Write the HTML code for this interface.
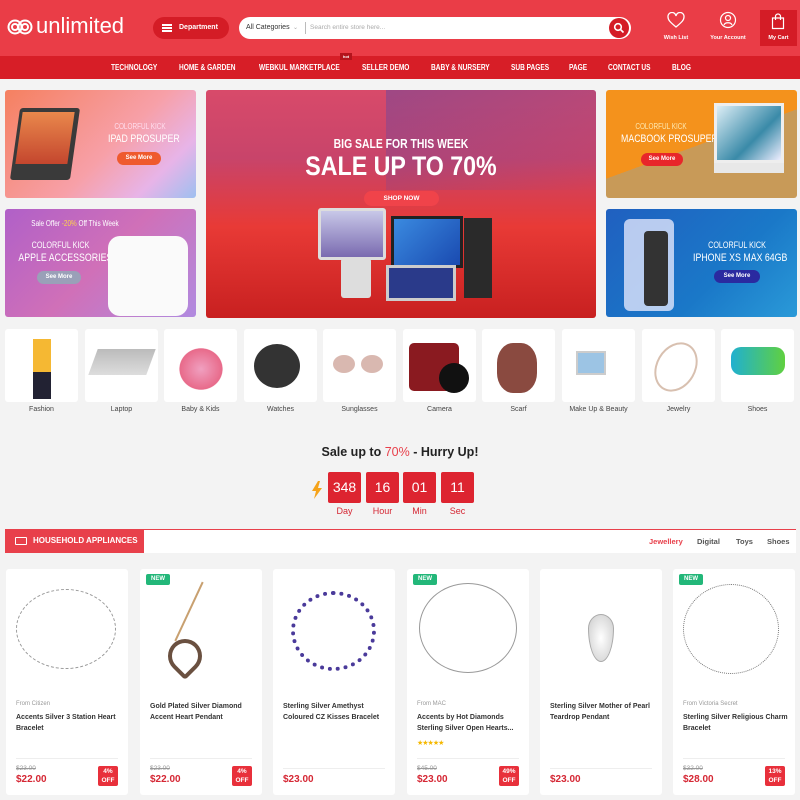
<!DOCTYPE html>
<html><head><meta charset="utf-8"><style>
*{margin:0;padding:0;box-sizing:border-box}
body{width:800px;height:800px;overflow:hidden;background:#f3f3f3;font-family:"Liberation Sans",sans-serif;position:relative}
.a{position:absolute}
.hdr{left:0;top:0;width:800px;height:56px;background:#ea3d47}
.nav{left:0;top:56px;width:800px;height:23px;background:#d71e27;color:#fff;font-size:8px;font-weight:bold}
.nav span{position:absolute;top:7px;white-space:nowrap;transform:scaleX(.82);transform-origin:left}
.ban{border-radius:3px;overflow:hidden}
.bt{color:#fff;text-align:center;white-space:nowrap;transform:scaleX(.8);transform-origin:center}
.btn{border-radius:9px;color:#fff;font-size:6px;text-align:center;line-height:13px;font-weight:bold}
.tile{top:329px;width:73px;height:73px;background:#fff;border-radius:3px}
.tl{top:406px;width:73px;text-align:center;font-size:7px;color:#444}
.cd{top:472px;width:33px;height:31px;background:#dd2430;border-radius:2px;color:#fff;font-size:14px;text-align:center;line-height:31px}
.cl{top:506px;width:33px;text-align:center;color:#d52734;font-size:9px}
.card{top:569px;width:122px;height:226px;background:#fff;border-radius:3px}
.card .from{position:absolute;left:10px;top:132px;font-size:6px;color:#999}
.card .nm{position:absolute;left:10px;font-size:7px;color:#333;line-height:11px;font-weight:bold;width:110px}
.card .ln{position:absolute;left:10px;right:10px;top:189px;border-top:1px solid #eee}
.card .old{position:absolute;left:10px;top:196px;font-size:6.5px;color:#999;text-decoration:line-through}
.card .pr{position:absolute;left:10px;top:205px;font-size:10px;color:#d52734;font-weight:bold}
.card .off{position:absolute;right:10px;top:197px;width:20px;height:20px;background:#e8303b;color:#fff;font-size:6.5px;font-weight:bold;text-align:center;line-height:9px;padding-top:1px;border-radius:2px}
.new{position:absolute;left:6px;top:5px;width:24px;height:11px;background:#22b779;color:#fff;font-size:6px;font-weight:bold;text-align:center;line-height:11px;border-radius:2px}
</style></head><body>
<div class="a hdr">
 <svg class="a" style="left:7px;top:17px" width="26" height="20" viewBox="0 0 26 20"><g fill="none" stroke="#fff" stroke-width="2"><circle cx="8" cy="10" r="6.5"/><circle cx="18" cy="10" r="6.5"/><circle cx="8" cy="10" r="3"/><circle cx="18" cy="10" r="3"/></g></svg>
 <div class="a" style="left:36px;top:13px;color:#fff;font-size:22px">unlimited</div>
 <div class="a" style="left:153px;top:17px;width:76px;height:22px;background:#d41c26;border-radius:11px;color:#fff;font-size:7px;font-weight:bold;line-height:22px;padding-left:26px">Department</div>
 <div class="a" style="left:162px;top:24px;width:10px;height:1.5px;background:#fff;box-shadow:0 3px 0 #fff,0 6px 0 #fff"></div>
 <div class="a" style="left:239px;top:17px;width:392px;height:22px;background:#fff;border-radius:11px"></div>
 <div class="a" style="left:246px;top:24px;font-size:7px;color:#333">All Categories</div>
 <div class="a" style="left:293px;top:24px;font-size:6px;color:#aaa">⌄</div>
 <div class="a" style="left:305px;top:22px;width:1px;height:12px;background:#bbb"></div>
 <div class="a" style="left:310px;top:24px;font-size:6.5px;color:#aaa">Search entire store here...</div>
 <div class="a" style="left:609px;top:18px;width:20px;height:20px;border-radius:50%;background:#d41c26"></div>
 <svg class="a" style="left:613px;top:22px" width="12" height="12"><circle cx="5" cy="5" r="3.3" fill="none" stroke="#fff" stroke-width="1.6"/><path d="M7.5 7.5l3 3" stroke="#fff" stroke-width="1.6"/></svg>
 <svg class="a" style="left:667px;top:12px" width="18" height="17" viewBox="0 0 18 17"><path d="M9 15C3 10 1 8 1 5a4 4 0 0 1 8-1 4 4 0 0 1 8 1c0 3-2 5-8 10z" fill="none" stroke="#fff" stroke-width="1.3"/></svg>
 <div class="a" style="left:660px;top:35px;width:32px;text-align:center;color:#fff;font-size:5.5px;font-weight:bold">Wish List</div>
 <svg class="a" style="left:719px;top:11px" width="18" height="18"><circle cx="9" cy="9" r="7.5" fill="none" stroke="#fff" stroke-width="1.2"/><circle cx="9" cy="7" r="2.5" fill="none" stroke="#fff" stroke-width="1.2"/><path d="M5 14c1-3 7-3 8 0" fill="none" stroke="#fff" stroke-width="1.2"/></svg>
 <div class="a" style="left:706px;top:35px;width:44px;text-align:center;color:#fff;font-size:5.5px;font-weight:bold">Your Account</div>
 <div class="a" style="left:760px;top:10px;width:37px;height:36px;background:#d41c26"></div>
 <svg class="a" style="left:771px;top:13px" width="14" height="17"><path d="M1.5 5h11v10.5h-11z M4.5 7V3.5a2.5 2.5 0 0 1 5 0V7" fill="none" stroke="#fff" stroke-width="1.2"/></svg>
 <div class="a" style="left:760px;top:35px;width:37px;text-align:center;color:#fff;font-size:5.5px;font-weight:bold">My Cart</div>
</div>
<div class="a nav">
 <span style="left:111px">TECHNOLOGY</span><span style="left:179px">HOME &amp; GARDEN</span><span style="left:259px">WEBKUL MARKETPLACE</span><span style="left:362px">SELLER DEMO</span><span style="left:431px">BABY &amp; NURSERY</span><span style="left:511px">SUB PAGES</span><span style="left:569px">PAGE</span><span style="left:608px">CONTACT US</span><span style="left:672px">BLOG</span>
 <div style="position:absolute;left:340px;top:-3px;width:12px;height:7px;background:#b3141c;font-size:4px;color:#fff;text-align:center;line-height:7px">hot</div>
</div>
<!-- banners -->
<div class="a ban" style="left:5px;top:90px;width:191px;height:108px;background:linear-gradient(135deg,#f58060,#f7a0a8 55%,#e7b4e8 80%,#9ec0f0)">
 <div class="a" style="left:10px;top:18px;width:60px;height:72px;background:#3a3a3a;border-radius:3px;transform:skewX(-8deg)"></div>
 <div class="a" style="left:14px;top:22px;width:52px;height:52px;background:linear-gradient(#e9884c,#c4462e);transform:skewX(-8deg)"></div>
 <div class="a bt" style="left:95px;top:32px;width:80px;font-size:8px;color:#fde">COLORFUL KICK</div>
 <div class="a bt" style="left:95px;top:43px;width:80px;font-size:11px">IPAD PROSUPER</div>
 <div class="a btn" style="left:112px;top:62px;width:44px;background:#ef5a2e">See More</div>
</div>
<div class="a ban" style="left:5px;top:209px;width:191px;height:108px;background:linear-gradient(135deg,#b060c8,#d070b8 50%,#b08ae0)">
 <div class="a bt" style="left:10px;top:10px;width:120px;font-size:8px">Sale Offer <span style="color:#ffd34a">-20%</span> Off This Week</div>
 <div class="a bt" style="left:8px;top:31px;width:95px;font-size:9px">COLORFUL KICK</div>
 <div class="a bt" style="left:3px;top:43px;width:104px;font-size:11px">APPLE ACCESSORIES</div>
 <div class="a btn" style="left:32px;top:62px;width:44px;height:13px;background:#9aa0b8">See More</div>
 <div class="a" style="left:103px;top:27px;width:80px;height:80px;background:#fafafa;border-radius:12px"></div>
</div>
<div class="a ban" style="left:206px;top:90px;width:390px;height:228px;background:linear-gradient(180deg,#d84a6a 0%,#c8446a 30%,#e83a36 60%,#c82020 100%)">
 <div class="a" style="left:180px;top:0;width:210px;height:100px;background:linear-gradient(160deg,rgba(120,70,150,.6),rgba(160,80,140,0))"></div>
 <div class="a bt" style="left:0;top:46px;width:390px;font-size:13px;font-weight:bold">BIG SALE FOR THIS WEEK</div>
 <div class="a bt" style="left:0;top:61px;width:390px;font-size:27px;font-weight:bold;transform:scaleX(.86)">SALE UP TO 70%</div>
 <div class="a btn" style="left:158px;top:101px;width:75px;height:15px;line-height:15px;background:#f0434a;font-size:6.5px">SHOP NOW</div>
 <div class="a" style="left:112px;top:118px;width:68px;height:52px;background:linear-gradient(#c8c8e8,#7a6ab0);border:3px solid #ddd;border-radius:3px"></div>
 <div class="a" style="left:185px;top:126px;width:72px;height:52px;background:linear-gradient(135deg,#3a8ae0,#1a4ab0);border:3px solid #222"></div>
 <div class="a" style="left:258px;top:128px;width:28px;height:80px;background:#2a2a2a"></div>
 <div class="a" style="left:180px;top:175px;width:70px;height:36px;background:#2a3a8a;border:3px solid #ccc"></div>
 <div class="a" style="left:135px;top:168px;width:30px;height:40px;background:#ddd;border-radius:3px"></div>
</div>
<div class="a ban" style="left:606px;top:90px;width:191px;height:108px;background:linear-gradient(160deg,#f4921c 50%,#c89a58 50%)">
 <div class="a bt" style="left:15px;top:32px;width:80px;font-size:8px;color:#fde8b0">COLORFUL KICK</div>
 <div class="a bt" style="left:5px;top:43px;width:100px;font-size:11px">MACBOOK PROSUPER</div>
 <div class="a btn" style="left:35px;top:63px;width:42px;background:#e8262a">See More</div>
 <div class="a" style="left:108px;top:13px;width:70px;height:60px;background:linear-gradient(135deg,#ddeef6,#3a8aa8 60%,#eef);border:3px solid #eee"></div>
 <div class="a" style="left:108px;top:73px;width:70px;height:10px;background:#e8e8e8"></div>
</div>
<div class="a ban" style="left:606px;top:209px;width:191px;height:108px;background:linear-gradient(135deg,#2060c0,#1a78c8 60%,#2a9ad8)">
 <div class="a" style="left:18px;top:10px;width:50px;height:92px;background:#eef;opacity:.75;border-radius:6px"></div>
 <div class="a" style="left:38px;top:22px;width:24px;height:75px;background:#333;border-radius:4px"></div>
 <div class="a bt" style="left:86px;top:31px;width:90px;font-size:9px">COLORFUL KICK</div>
 <div class="a bt" style="left:76px;top:43px;width:110px;font-size:11px">IPHONE XS MAX 64GB</div>
 <div class="a btn" style="left:108px;top:61px;width:46px;height:13px;background:#2a2aa0">See More</div>
</div>
<!-- tiles -->
<div class="a tile" style="left:5px"><div class="a" style="left:28px;top:10px;width:18px;height:60px;background:linear-gradient(#f5b833 0 55%,#223 55%)"></div></div>
<div class="a tile" style="left:85px"><div class="a" style="left:8px;top:20px;width:58px;height:26px;background:linear-gradient(#bbb,#ddd);transform:skewX(-20deg)"></div></div>
<div class="a tile" style="left:164px"><div class="a" style="left:12px;top:16px;width:50px;height:48px;background:radial-gradient(#f0a0c0,#e86a8a 60%,transparent 62%)"></div></div>
<div class="a tile" style="left:244px"><div class="a" style="left:10px;top:15px;width:46px;height:44px;border-radius:50%;background:#333"></div></div>
<div class="a tile" style="left:323px"><div class="a" style="left:10px;top:26px;width:22px;height:18px;border-radius:50%;background:#d9b8b0"></div><div class="a" style="left:38px;top:26px;width:22px;height:18px;border-radius:50%;background:#d9b8b0"></div></div>
<div class="a tile" style="left:403px"><div class="a" style="left:6px;top:14px;width:50px;height:48px;background:#8a1a20;border-radius:5px"></div><div class="a" style="left:36px;top:34px;width:30px;height:30px;border-radius:50%;background:#111"></div></div>
<div class="a tile" style="left:482px"><div class="a" style="left:15px;top:14px;width:40px;height:50px;background:#8a4a40;border-radius:40%"></div></div>
<div class="a tile" style="left:562px"><div class="a" style="left:14px;top:22px;width:30px;height:24px;background:#9cc4e4;border:2px solid #ccc"></div></div>
<div class="a tile" style="left:642px"><div class="a" style="left:14px;top:12px;width:40px;height:52px;border:2px solid #d8c0b0;border-radius:50%;transform:rotate(30deg)"></div></div>
<div class="a tile" style="left:721px"><div class="a" style="left:10px;top:18px;width:54px;height:28px;background:linear-gradient(90deg,#20b0d0,#60d040);border-radius:10px"></div></div>
<div class="a tl" style="left:5px">Fashion</div><div class="a tl" style="left:85px">Laptop</div><div class="a tl" style="left:164px">Baby &amp; Kids</div><div class="a tl" style="left:244px">Watches</div><div class="a tl" style="left:323px">Sunglasses</div><div class="a tl" style="left:403px">Camera</div><div class="a tl" style="left:482px">Scarf</div><div class="a tl" style="left:562px">Make Up &amp; Beauty</div><div class="a tl" style="left:642px">Jewelry</div><div class="a tl" style="left:721px">Shoes</div>
<!-- countdown -->
<div class="a" style="left:0;top:445px;width:800px;text-align:center;font-size:12.5px;font-weight:bold;color:#222">Sale up to <span style="color:#e8404b;font-weight:normal">70%</span> - Hurry Up!</div>
<svg class="a" style="left:311px;top:481px" width="12" height="18"><path d="M7 0L1 10h4l-2 8 8-11H7l2-7z" fill="#f5a31a"/></svg>
<div class="a cd" style="left:328px">348</div><div class="a cd" style="left:366px">16</div><div class="a cd" style="left:403px">01</div><div class="a cd" style="left:441px">11</div>
<div class="a cl" style="left:328px">Day</div><div class="a cl" style="left:366px">Hour</div><div class="a cl" style="left:403px">Min</div><div class="a cl" style="left:441px">Sec</div>
<!-- section bar -->
<div class="a" style="left:5px;top:529px;width:791px;height:24px;background:#fff;border-top:1px solid #e8404b"></div>
<div class="a" style="left:5px;top:529px;width:139px;height:24px;background:#e8404b;color:#fff;font-size:8px;font-weight:bold;line-height:24px;padding-left:28px">HOUSEHOLD APPLIANCES</div>
<div class="a" style="left:15px;top:537px;width:12px;height:8px;border:1.3px solid #fff;border-radius:1px"></div>
<div class="a" style="left:649px;top:537px;font-size:7.5px;font-weight:bold;color:#e8404b">Jewellery</div>
<div class="a" style="left:697px;top:537px;font-size:7.5px;font-weight:bold;color:#555">Digital</div>
<div class="a" style="left:736px;top:537px;font-size:7.5px;font-weight:bold;color:#555">Toys</div>
<div class="a" style="left:767px;top:537px;font-size:7.5px;font-weight:bold;color:#555">Shoes</div>
<!-- cards -->
<div class="a card" style="left:6px"><div class="a" style="left:10px;top:20px;width:100px;height:80px;border:1.5px dashed #999;border-radius:50%"></div><div class="from">From Citizen</div><div class="nm" style="top:143px">Accents Silver 3 Station Heart Bracelet</div><div class="ln"></div><div class="old">$23.00</div><div class="pr">$22.00</div><div class="off">4%<br>OFF</div></div>
<div class="a card" style="left:140px"><div class="new">NEW</div><div class="a" style="left:28px;top:70px;width:34px;height:34px;border:4px solid #6a5040;border-radius:50% 50% 10% 50%;transform:rotate(45deg)"></div><div class="a" style="left:48px;top:10px;width:2px;height:65px;background:#c8a070;transform:rotate(25deg)"></div><div class="nm" style="top:132px">Gold Plated Silver Diamond Accent Heart Pendant</div><div class="ln"></div><div class="old">$23.00</div><div class="pr">$22.00</div><div class="off">4%<br>OFF</div></div>
<div class="a card" style="left:273px"><div class="a" style="left:18px;top:22px;width:85px;height:80px;border:4px dotted #4a3a9a;border-radius:50%"></div><div class="nm" style="top:132px">Sterling Silver Amethyst Coloured CZ Kisses Bracelet</div><div class="a" style="left:10px;right:10px;top:199px;border-top:1px solid #eee"></div><div class="pr" style="top:205px">$23.00</div></div>
<div class="a card" style="left:407px"><div class="new">NEW</div><div class="a" style="left:12px;top:14px;width:98px;height:90px;border:1.5px solid #999;border-radius:50%"></div><div class="from">From MAC</div><div class="nm" style="top:143px">Accents by Hot Diamonds Sterling Silver Open Hearts...</div><div class="a" style="left:10px;top:170px;font-size:7px;color:#f5b800;letter-spacing:-1px">★★★★★</div><div class="ln"></div><div class="old">$45.00</div><div class="pr">$23.00</div><div class="off">49%<br>OFF</div></div>
<div class="a card" style="left:540px"><div class="a" style="left:48px;top:45px;width:26px;height:48px;background:radial-gradient(#fff,#ccc);border:1px solid #aaa;border-radius:50% 50% 50% 50%/30% 30% 70% 70%"></div><div class="nm" style="top:132px">Sterling Silver Mother of Pearl Teardrop Pendant</div><div class="a" style="left:10px;right:10px;top:199px;border-top:1px solid #eee"></div><div class="pr" style="top:205px">$23.00</div></div>
<div class="a card" style="left:673px"><div class="new">NEW</div><div class="a" style="left:10px;top:15px;width:96px;height:90px;border:1.5px dotted #777;border-radius:50%"></div><div class="from">From Victoria Secret</div><div class="nm" style="top:143px">Sterling Silver Religious Charm Bracelet</div><div class="ln"></div><div class="old">$32.00</div><div class="pr">$28.00</div><div class="off">13%<br>OFF</div></div>
</body></html>
